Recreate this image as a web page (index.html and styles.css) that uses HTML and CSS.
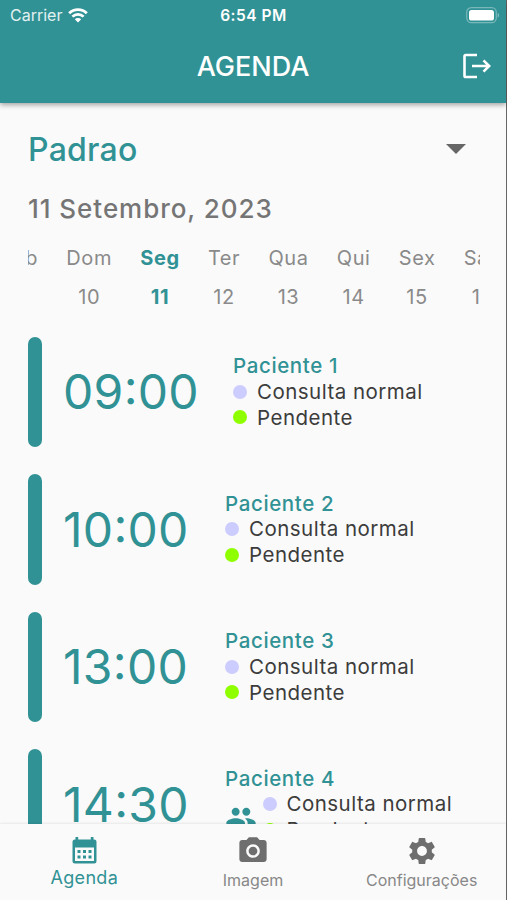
FILE: index.html
```html
<!DOCTYPE html>
<html lang="pt-BR">
<head>
    <meta charset="UTF-8">
    <meta name="viewport" content="width=device-width, initial-scale=1.0">
    <title>Agenda</title>
    <link rel="stylesheet" href="styles.css">
</head>
<body>
    <div class="app">
        <header class="header">
            <div class="status">
                <div class="carrier">
                    <span>Carrier</span>
                    <svg class="wifi" viewBox="0 0 20 15">
                        <path d="M1.2 5.2a12.6 12.6 0 0 1 17.6 0" fill="none" stroke="#fff" stroke-width="2.9"/>
                        <path d="M4.4 8.6a8 8 0 0 1 11.2 0" fill="none" stroke="#fff" stroke-width="2.7"/>
                        <path d="M6.8 11.2a4.6 4.6 0 0 1 6.4 0L10 14.6z" fill="#fff"/>
                    </svg>
                </div>
                <span class="clock">6:54 PM</span>
                <svg class="battery" viewBox="0 0 34 17">
                    <rect x=".7" y=".7" width="29.6" height="15" rx="4.6" fill="none" stroke="#fff" stroke-opacity=".35" stroke-width="1.2"/>
                    <rect x="3" y="3" width="25" height="10.5" rx="2.6" fill="#fff"/>
                    <path d="M31.7 5.8c1.8.8 1.8 4.200 0 5z" fill="#fff" fill-opacity=".4"/>
                </svg>
            </div>
            <div class="title-bar">
                <h1>AGENDA</h1>
                <svg class="logout" viewBox="0 0 28 26">
                    <path d="M14 2H2.800Q1.500 2 1.500 3.300V22.700Q1.500 24 2.800 24H14M9 13H26M20.500 7.300L26.200 13L20.500 18.700" fill="none" stroke="#fff" stroke-width="2.600"/>
                </svg>
            </div>
        </header>

        <main class="content">
            <div class="select">
                <span>Padrao</span>
                <i class="arrow"></i>
            </div>
            <h2 class="date">11 Setembro, 2023</h2>

            <div class="days">
                <div class="day"><span>Sáb</span><span>9</span></div>
                <div class="day"><span>Dom</span><span>10</span></div>
                <div class="day active"><span>Seg</span><span>11</span></div>
                <div class="day"><span>Ter</span><span>12</span></div>
                <div class="day"><span>Qua</span><span>13</span></div>
                <div class="day"><span>Qui</span><span>14</span></div>
                <div class="day"><span>Sex</span><span>15</span></div>
                <div class="day"><span>Sáb</span><span>16</span></div>
            </div>

            <div class="list">
                <div class="item">
                    <div class="time first">09:00</div>
                    <div class="info">
                        <h3>Paciente 1</h3>
                        <p><i class="dot consulta"></i>Consulta normal</p>
                        <p><i class="dot pendente"></i>Pendente</p>
                    </div>
                </div>
                <div class="item">
                    <div class="time">10:00</div>
                    <div class="info">
                        <h3>Paciente 2</h3>
                        <p><i class="dot consulta"></i>Consulta normal</p>
                        <p><i class="dot pendente"></i>Pendente</p>
                    </div>
                </div>
                <div class="item">
                    <div class="time">13:00</div>
                    <div class="info">
                        <h3>Paciente 3</h3>
                        <p><i class="dot consulta"></i>Consulta normal</p>
                        <p><i class="dot pendente"></i>Pendente</p>
                    </div>
                </div>
                <div class="item">
                    <div class="time">14:30</div>
                    <div class="info">
                        <h3>Paciente 4</h3>
                        <div class="group">
                            <svg class="people" viewBox="0 0 24 24">
                                <path d="M16 11c1.660 0 2.990-1.340 2.990-3S17.660 5 16 5s-3 1.340-3 3 1.340 3 3 3zm-8 0c1.660 0 2.990-1.340 2.990-3S9.660 5 8 5 5 6.340 5 8s1.340 3 3 3zm0 2c-2.330 0-7 1.170-7 3.500V19h14v-2.500C15 14.170 10.330 13 8 13zm8 0c-.29 0-.62.02-.97.05 1.160.84 1.970 1.970 1.970 3.450V19h6v-2.500c0-2.330-4.670-3.500-7-3.500z"/>
                            </svg>
                            <div>
                                <p><i class="dot consulta"></i>Consulta normal</p>
                                <p><i class="dot pendente"></i>Pendente</p>
                            </div>
                        </div>
                    </div>
                </div>
            </div>
        </main>

        <nav class="tabs">
            <a class="tab active">
                <svg viewBox="-2.500 0 30 30">
                    <path fill-rule="evenodd" d="M4 1h2.700v2.500h12.600V1H22v2.500h.5q2.500 0 2.500 2.500v19q0 2.500-2.500 2.500h-19Q1 27.500 1 25V6q0-2.500 2.500-2.500H4zM3.500 11.500V25h19V11.500z"/>
                    <path d="M6 14h3v3H6zm5.500 0h3v3h-3zm5.500 0h3v3h-3zM6 19.500h3v3H6zm5.500 0h3v3h-3zm5.500 0h3v3h-3z"/>
                </svg>
                <span>Agenda</span>
            </a>
            <a class="tab">
                <svg viewBox="1 1 22 22">
                    <circle cx="12" cy="12" r="3.200"/>
                    <path d="M9 2L7.170 4H4c-1.100 0-2 .9-2 2v12c0 1.100.9 2 2 2h16c1.100 0 2-.9 2-2V6c0-1.100-.9-2-2-2h-3.170L15 2H9zm3 15c-2.760 0-5-2.240-5-5s2.240-5 5-5 5 2.240 5 5-2.240 5-5 5z"/>
                </svg>
                <span>Imagem</span>
            </a>
            <a class="tab">
                <svg viewBox="1 1 22 22">
                    <path d="M19.140 12.940c.04-.3.06-.61.06-.94 0-.32-.02-.64-.07-.94l2.030-1.580c.18-.14.23-.41.12-.61l-1.920-3.320c-.12-.22-.37-.29-.59-.22l-2.390.96c-.5-.38-1.030-.7-1.620-.94l-.36-2.540c-.04-.24-.24-.41-.48-.41h-3.840c-.24 0-.43.17-.47.41l-.36 2.540c-.59.24-1.130.57-1.620.94l-2.390-.96c-.22-.08-.47 0-.59.22L2.740 8.870c-.12.21-.08.47.12.61l2.030 1.580c-.05.3-.09.63-.09.94s.02.64.07.94l-2.030 1.580c-.18.14-.23.41-.12.61l1.920 3.320c.12.22.37.29.59.22l2.390-.96c.5.38 1.030.7 1.620.94l.36 2.540c.05.24.24.41.48.41h3.840c.24 0 .44-.17.47-.41l.36-2.540c.59-.24 1.130-.56 1.620-.94l2.390.96c.22.08.47 0 .59-.22l1.920-3.320c.12-.22.07-.47-.12-.61l-2.010-1.580zM12 15.600c-1.980 0-3.600-1.620-3.600-3.600s1.620-3.600 3.600-3.600 3.600 1.620 3.600 3.600-1.620 3.600-3.600 3.600z"/>
                </svg>
                <span>Configurações</span>
            </a>
        </nav>
    </div>
</body>
</html>
```
FILE: styles.css
```css
* {
    box-sizing: border-box;
}

body {
    margin: 0;
    font-family: 'Inter', sans-serif;
    background-color: #fafafa;
    overflow: hidden;
}

h1, h2, h3, p {
    margin: 0;
}

.app {
    display: flex;
    flex-direction: column;
    width: 507px;
    height: 900px;
    border-right: 1px solid #666;
}

/* CABECERA */
.header {
    height: 103px;
    flex-shrink: 0;
    background: #319295;
    color: #fff;
    box-shadow: 0 2px 5px rgba(0, 0, 0, 0.35);
    z-index: 1;
}

.status {
    display: grid;
    grid-template-columns: 1fr auto 1fr;
    align-items: center;
    height: 30px;
    padding: 0 6px 0 10px;
    font-size: 16px;
}

.carrier {
    display: flex;
    align-items: center;
    gap: 6px;
    color: #e2f1f1;
}

.wifi {
    width: 20px;
    height: 15px;
}

.clock {
    margin-right: 3px;
    font-weight: 600;
    font-size: 15.5px;
    letter-spacing: 0.5px;
}

.battery {
    width: 34px;
    height: 17px;
    justify-self: end;
}

.title-bar {
    display: grid;
    grid-template-columns: 1fr auto 1fr;
    align-items: center;
    height: 72px;
    padding: 0 15px;
}

.title-bar h1 {
    grid-column: 2;
    font-size: 27px;
    font-weight: 500;
}

.logout {
    width: 28px;
    height: 26px;
    justify-self: end;
}

/* CONTENIDO */
.content {
    flex: 1;
    min-height: 0;
    overflow: hidden;
    padding: 23px 26px 0 28px;
}

.select {
    display: flex;
    align-items: center;
    justify-content: space-between;
    height: 46px;
    padding-right: 14px;
    font-size: 32px;
    font-weight: 500;
    letter-spacing: 0.25px;
    color: #319295;
}

.arrow {
    border: 10px solid transparent;
    border-top-color: #666;
    border-bottom: 0;
}

.date {
    margin-top: 19px;
    font-size: 26px;
    line-height: 36px;
    font-weight: 500;
    letter-spacing: 0.95px;
    color: #757575;
}

.days {
    display: flex;
    gap: 28.2px;
    height: 97.5px;
    margin-top: 12px;
    overflow: hidden;
}

.day {
    display: flex;
    flex-direction: column;
    align-items: center;
    flex-shrink: 0;
    font-size: 20px;
    line-height: 39px;
    letter-spacing: 0.6px;
    color: #8a8a8a;
}

/* El primer día queda desplazado fuera del carrusel */
.day:first-child {
    margin-left: -28px;
}

.day.active {
    font-weight: 700;
    color: #319295;
}

/* CITAS */
.item {
    display: flex;
    align-items: center;
    height: 110.5px;
    margin-bottom: 27px;
}

.item::before {
    content: '';
    width: 14px;
    height: 100%;
    border-radius: 7px;
    background: #319295;
}

.time {
    width: 162px;
    margin-left: 21px;
    font-size: 48px;
    font-weight: 400;
    font-feature-settings: 'case';
    letter-spacing: 0.3px;
    color: #319295;
}

.time.first {
    width: 170px;
}

.info {
    font-size: 20.5px;
    line-height: 25.7px;
    letter-spacing: 0.48px;
    color: #3c3c3c;
}

.info h3 {
    font-size: 20.5px;
    font-weight: 500;
    letter-spacing: 0.62px;
    color: #319295;
}

.info p {
    display: flex;
    align-items: center;
}

.dot {
    width: 14px;
    height: 14px;
    margin-right: 10px;
    border-radius: 50%;
}

.consulta {
    background: #ccccff;
}

.pendente {
    background: #8fff00;
}

.group {
    display: flex;
    align-items: center;
    gap: 5.5px;
}

.people {
    width: 32px;
    height: 32px;
    fill: #319295;
}

/* MENÚ INFERIOR */
.tabs {
    display: grid;
    grid-template-columns: repeat(3, 1fr);
    flex-shrink: 0;
    height: 76px;
    background: #fafafa;
    box-shadow: 0 -1px 2px rgba(0, 0, 0, 0.08);
    z-index: 1;
}

.tab {
    display: flex;
    flex-direction: column;
    align-items: center;
    padding-top: 12px;
    font-size: 16px;
    color: #888;
}

.tab svg {
    width: 30px;
    height: 30px;
    fill: #6e6e6e;
}

.tab span {
    margin-top: 4px;
}

.tab.active {
    font-size: 18px;
    letter-spacing: 0.3px;
    color: #319295;
}

.tab.active svg {
    fill: #319295;
}

.tab.active span {
    margin-top: 1px;
}
```
